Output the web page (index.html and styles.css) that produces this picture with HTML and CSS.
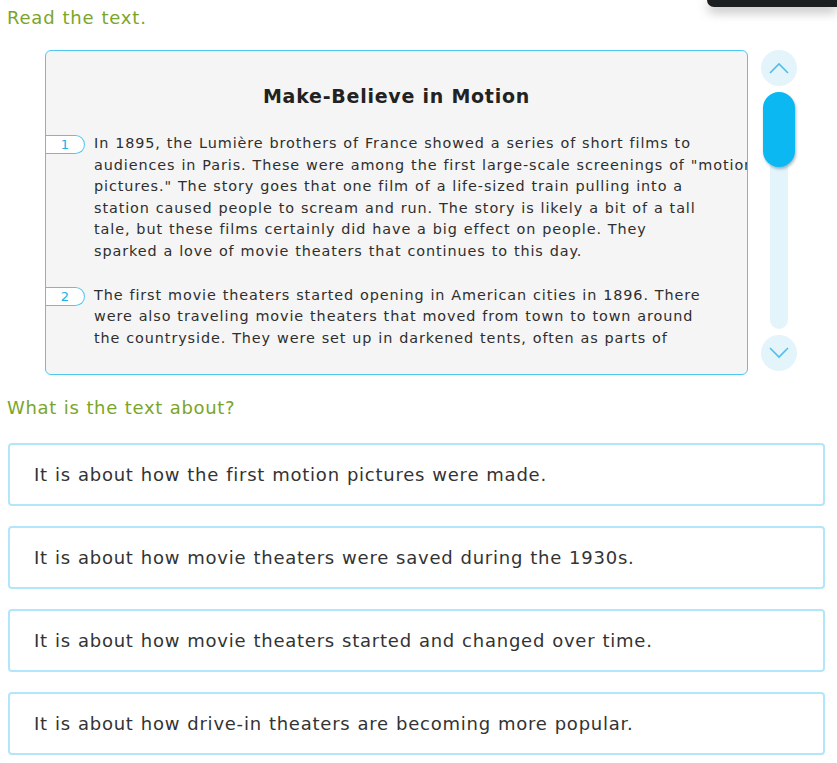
FILE: index.html
```html
<!DOCTYPE html>
<html lang="en">
<head>
  <meta charset="UTF-8">
  <title>Read the text</title>
  <link rel="stylesheet" href="styles.css">
</head>
<body>
  <div class="toolbar"></div>

  <div class="page">
    <h1 class="prompt">Read the text.</h1>

    <div class="reader">
      <div class="passage">
        <div class="passage-view">
          <h2 class="passage-title">Make-Believe in Motion</h2>

          <div class="para">
            <span class="para-num">1</span>
            <p>In 1895, the Lumière brothers of France showed a series of short films to<br>
            audiences in Paris. These were among the first large-scale screenings of "motion<br>
            pictures." The story goes that one film of a life-sized train pulling into a<br>
            station caused people to scream and run. The story is likely a bit of a tall<br>
            tale, but these films certainly did have a big effect on people. They<br>
            sparked a love of movie theaters that continues to this day.</p>
          </div>

          <div class="para">
            <span class="para-num">2</span>
            <p>The first movie theaters started opening in American cities in 1896. There<br>
            were also traveling movie theaters that moved from town to town around<br>
            the countryside. They were set up in darkened tents, often as parts of<br>
            fairs or carnivals.</p>
          </div>
        </div>
      </div>

      <div class="scroller">
        <button class="scroll-btn" aria-label="Scroll up">
          <svg width="20" height="12" viewBox="0 0 20 12"><polyline points="1,11 10,2 19,11" fill="none" stroke="#52bdea" stroke-width="1.6"/></svg>
        </button>
        <div class="track">
          <div class="thumb"></div>
        </div>
        <button class="scroll-btn" aria-label="Scroll down">
          <svg width="20" height="12" viewBox="0 0 20 12"><polyline points="1,1 10,10 19,1" fill="none" stroke="#52bdea" stroke-width="1.6"/></svg>
        </button>
      </div>
    </div>

    <h3 class="prompt question">What is the text about?</h3>

    <div class="choices">
      <div class="choice">It is about how the first motion pictures were made.</div>
      <div class="choice">It is about how movie theaters were saved during the 1930s.</div>
      <div class="choice">It is about how movie theaters started and changed over time.</div>
      <div class="choice">It is about how drive-in theaters are becoming more popular.</div>
    </div>
  </div>
</body>
</html>
```

FILE: styles.css
```css
body {
  margin: 0;
  font-family: 'DejaVu Sans', Verdana, sans-serif;
  color: #333;
  background: #fff;
}
.toolbar {
  position: absolute;
  top: 0;
  right: 0;
  width: 130px;
  height: 7px;
  background: #1b1f22;
  border-radius: 0 0 0 9px;
  box-shadow: 0 4px 12px rgba(0, 0, 0, 0.35);
}
.page {
  padding: 0 12px 0 7px;
}
.prompt {
  margin: 7px 0 21px;
  font-size: 18px;
  font-weight: normal;
  line-height: 22px;
  letter-spacing: 0.8px;
  word-spacing: 0.5px;
  color: #7ba52a;
}
.question {
  margin: 22px 0 24px;
  letter-spacing: 0.66px;
}

/* passage with its custom scrollbar */
.reader {
  display: flex;
  margin-left: 38px;
}
.passage {
  box-sizing: border-box;
  width: 703px;
  height: 325px;
  background: #f5f5f5;
  border: 1px solid #4ec8f1;
  border-radius: 6px;
  overflow: hidden;
}
.passage-view {
  box-sizing: border-box;
  height: 297px;
  padding-top: 33px;
  overflow: hidden;
}
.passage-title {
  margin: 0 0 25px;
  text-align: center;
  font-size: 19px;
  line-height: 24px;
  letter-spacing: 0.75px;
  color: #222;
}
.para {
  display: flex;
  align-items: flex-start;
  margin-bottom: 22px;
}
.para-num {
  flex: none;
  box-sizing: border-box;
  width: 39px;
  height: 19px;
  margin-top: 2px;
  margin-right: 9px;
  border: 1px solid #4ec8f1;
  border-left: none;
  border-radius: 0 10px 10px 0;
  text-align: center;
  font-size: 13px;
  line-height: 17px;
  color: #1eaee8;
  background: #fff;
}
.para p {
  margin: 0;
  font-size: 14.4px;
  line-height: 21.6px;
  letter-spacing: 0.9px;
  word-spacing: 0.5px;
  white-space: nowrap;
  color: #2e2e2e;
}
.scroller {
  display: flex;
  flex-direction: column;
  align-items: center;
  gap: 6px;
  width: 36px;
  margin-left: 13px;
}
.scroll-btn {
  display: flex;
  align-items: center;
  justify-content: center;
  width: 36px;
  height: 36px;
  padding: 0;
  border: none;
  border-radius: 50%;
  background: #e3f4fb;
}
.track {
  position: relative;
  width: 18px;
  height: 237px;
  border-radius: 9px;
  background: #e3f4fb;
}
.thumb {
  position: absolute;
  top: 0;
  left: -7px;
  width: 32px;
  height: 75px;
  border-radius: 16px;
  background: #0bb8f2;
  box-shadow: 1px 2px 3px rgba(0, 60, 90, 0.35);
}

/* answer choices */
.choices {
  display: flex;
  flex-direction: column;
  gap: 20px;
  margin-left: 1px;
}
.choice {
  box-sizing: border-box;
  height: 63px;
  padding: 0 24px;
  display: flex;
  align-items: center;
  border: 2px solid #b2e6fa;
  border-radius: 4px;
  font-size: 18px;
  letter-spacing: 0.76px;
  word-spacing: 0.6px;
  color: #333;
}
```
